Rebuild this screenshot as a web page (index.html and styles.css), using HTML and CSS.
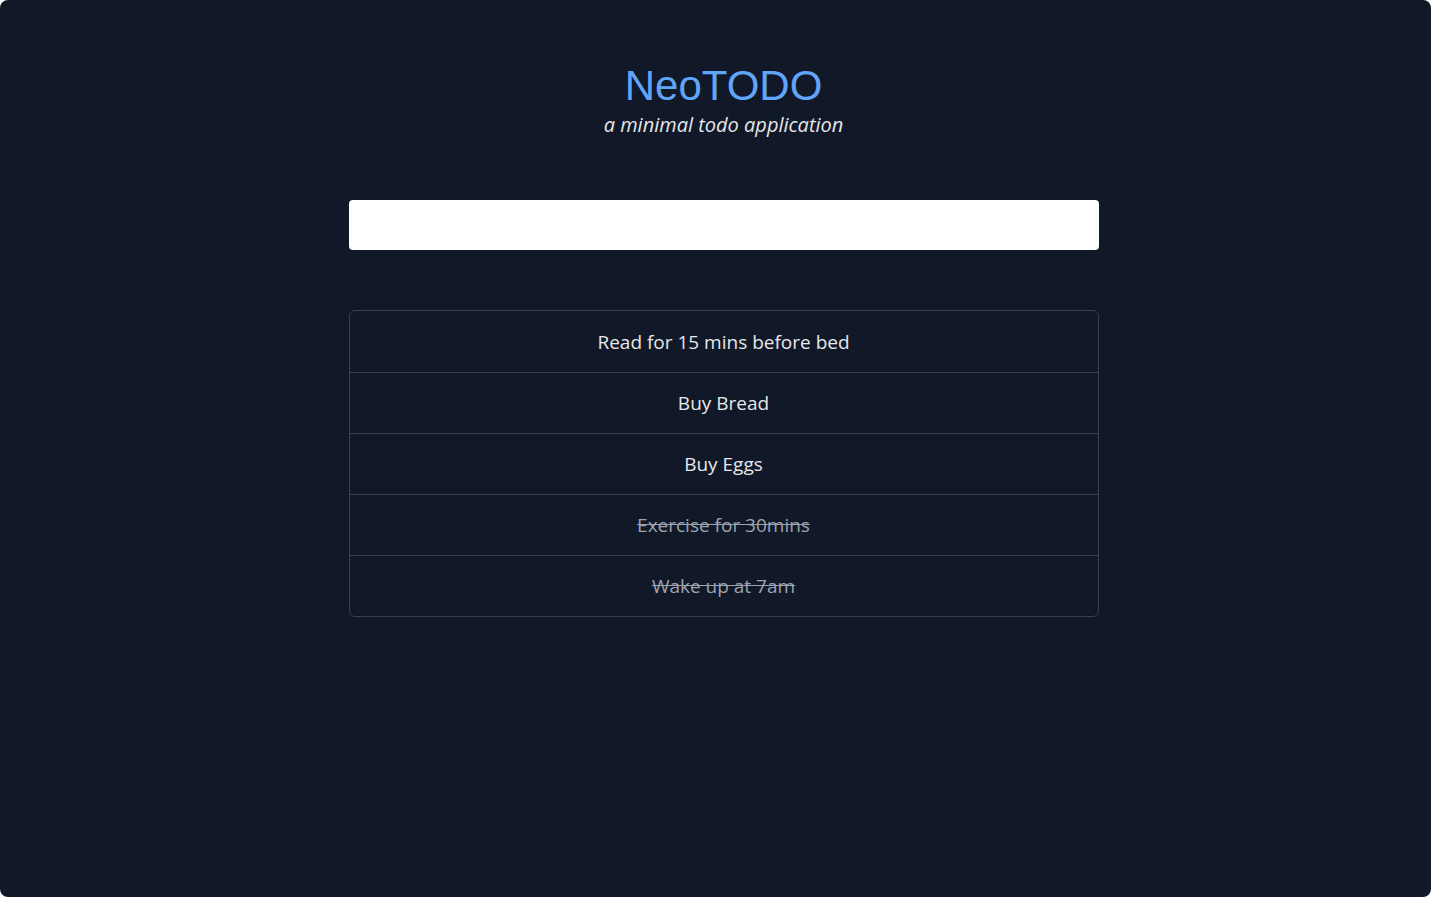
FILE: index.html
```html
<!DOCTYPE html>
<html>
<head>
<meta charset="utf-8">
<link rel="stylesheet" href="styles.css">
</head>
<body>
<div class="app">
  <header class="header">
    <h1 class="title">NeoTODO</h1>
    <p class="subtitle">a minimal todo application</p>
  </header>
  <input class="todo-input" type="text">
  <ul class="todo-list">
    <li class="todo-item">Read for 15 mins before bed</li>
    <li class="todo-item">Buy Bread</li>
    <li class="todo-item">Buy Eggs</li>
    <li class="todo-item done">Exercise for 30mins</li>
    <li class="todo-item done">Wake up at 7am</li>
  </ul>
</div>
</body>
</html>
```
FILE: styles.css
```css
html, body {
  margin: 0;
  padding: 0;
  background: #ffffff;
}
.app {
  box-sizing: border-box;
  height: 897px;
  width: 1431px;
  background: #111827;
  border-radius: 8px;
  display: flex;
  flex-direction: column;
  align-items: center;
  padding-top: 60px;
  padding-left: 16px;
  font-family: "Open Sans", "Noto Sans", sans-serif;
}
.header {
  text-align: center;
}
.title {
  margin: 0;
  font-family: "Liberation Sans", Arial, sans-serif;
  font-weight: 400;
  font-size: 42px;
  line-height: 52px;
  color: #60a5fa;
}
.subtitle {
  margin: 0;
  font-style: italic;
  font-size: 20px;
  line-height: 26px;
  color: #e5e7eb;
}
.todo-input {
  margin-top: 62px;
  width: 750px;
  height: 50px;
  box-sizing: border-box;
  border: none;
  border-radius: 4px;
  background: #ffffff;
  outline: none;
}
.todo-list {
  list-style: none;
  margin: 60px 0 0 0;
  padding: 0;
  width: 750px;
  box-sizing: border-box;
  border: 1px solid #374151;
  border-radius: 6px;
}
.todo-item {
  height: 60px;
  display: flex;
  align-items: center;
  justify-content: center;
  font-size: 19px;
  color: #e5e7eb;
  border-top: 1px solid #374151;
}
.todo-item:first-child {
  border-top: none;
  height: 61px;
}
.todo-item.done {
  color: #9ca3af;
  text-decoration: line-through;
}
```
